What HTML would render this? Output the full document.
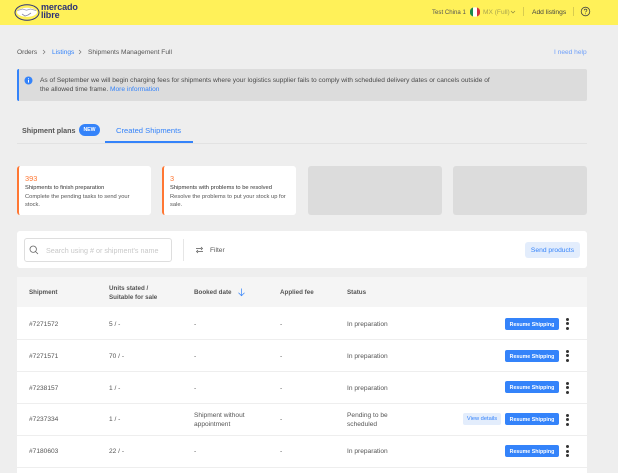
<!DOCTYPE html>
<html><head><meta charset="utf-8">
<style>
*{box-sizing:border-box}
html,body{margin:0;padding:0;width:618px;height:473px;overflow:hidden;background:#eeeeee;font-family:"Liberation Sans",sans-serif;color:#444}
.a{position:absolute;white-space:nowrap}
.t{font-size:6.6px;line-height:8px;color:#555}
.h{font-weight:bold;color:#555;font-size:6.25px}
.b{position:absolute;left:505px;width:54px;height:12px;background:#3483fa;border-radius:2px;color:#fff;font-size:5.3px;font-weight:bold;line-height:14px;text-align:center;white-space:nowrap;overflow:hidden}
.d{position:absolute;left:566px;width:3px;height:3px;border-radius:50%;background:#333}
.l{position:absolute;left:17px;width:570px;height:1px;background:#eeeeee}
.c{position:absolute;top:166px;width:134px;height:49px;border-radius:3px}
.s{font-size:5.75px;line-height:7.6px}
</style></head><body>
<div class="a" style="left:0;top:0;width:618px;height:25px;background:#fff159"></div>
<svg class="a" style="left:14px;top:3px" width="26" height="18" viewBox="0 0 26 18"><ellipse cx="13" cy="9.5" rx="12.5" ry="8.3" fill="#2d3277"/><ellipse cx="13" cy="9.5" rx="11.5" ry="7.3" fill="#fff159"/><ellipse cx="13" cy="9.3" rx="10" ry="4.6" fill="#fff"/><path d="M3.5 7.5l5-1.5 4 1.2 4-1.2 5.5 1.5" stroke="#9a9ab5" stroke-width=".8" fill="none"/><path d="M8 11l3 2 3-1 3-2" stroke="#8a8aa8" stroke-width=".8" fill="none"/></svg>
<div class="a" style="left:41px;top:4px;font-size:9px;line-height:7.8px;font-weight:bold;color:#2d3277;letter-spacing:-.1px">mercado<br>libre</div>
<div class="a t" style="left:432px;top:8.5px;font-size:6.1px">Test China 1</div>
<svg class="a" style="left:470px;top:7px" width="10" height="10" viewBox="0 0 10 10"><circle cx="5" cy="5" r="4.8" fill="#fff"/><path d="M3 .5A4.8 4.8 0 0 0 3 9.5Z" fill="#1a8a4a"/><path d="M7 .5A4.8 4.8 0 0 1 7 9.5Z" fill="#d5323c"/></svg>
<div class="a t" style="left:483px;top:8.5px;color:#a9a44f">MX (Full)</div>
<svg class="a" style="left:510px;top:10px" width="6" height="4" viewBox="0 0 6 4"><path d="M1 1l2 2 2-2" stroke="#8a8640" stroke-width=".7" fill="none"/></svg>
<div class="a" style="left:523px;top:7px;width:1px;height:9px;background:#d8cc50"></div>
<div class="a t" style="left:532px;top:8.5px;color:#444;font-size:6.7px">Add listings</div>
<div class="a" style="left:573px;top:7px;width:1px;height:9px;background:#d8cc50"></div>
<svg class="a" style="left:580px;top:6px" width="11" height="11" viewBox="0 0 11 11"><circle cx="5.5" cy="5.5" r="4.3" stroke="#444" stroke-width=".8" fill="none"/><path d="M4.2 4.4c0-1.7 2.7-1.7 2.7 0 0 1-1.3 1-1.3 2" stroke="#444" stroke-width=".7" fill="none"/><circle cx="5.5" cy="7.8" r=".45" fill="#444"/></svg>

<div class="a t" style="left:17px;top:49px">Orders</div>
<svg class="a" style="left:42px;top:49px" width="4" height="6" viewBox="0 0 4 6"><path d="M1 1l2 2-2 2" stroke="#777" stroke-width=".7" fill="none"/></svg>
<div class="a t" style="left:52px;top:49px;color:#3483fa">Listings</div>
<svg class="a" style="left:78px;top:49px" width="4" height="6" viewBox="0 0 4 6"><path d="M1 1l2 2-2 2" stroke="#777" stroke-width=".7" fill="none"/></svg>
<div class="a t" style="left:88px;top:49px">Shipments Management Full</div>
<div class="a t" style="left:554px;top:49px;color:#6e9ffa">I need help</div>

<div class="a" style="left:17px;top:69px;width:570px;height:32px;background:#dcdcdc;border-radius:2px;border-left:2px solid #3483fa"></div>
<svg class="a" style="left:24px;top:76px" width="9" height="9" viewBox="0 0 9 9"><circle cx="4.5" cy="4.5" r="4" fill="#3483fa"/><rect x="4" y="4" width="1" height="2.6" fill="#fff"/><rect x="4" y="2.3" width="1" height="1" fill="#fff"/></svg>
<div class="a t" style="left:40px;top:77px;line-height:8.5px;font-size:6.6px;color:#4a4a4a">As of September we will begin charging fees for shipments where your logistics supplier fails to comply with scheduled delivery dates or cancels outside of<br>the allowed time frame. <span style="color:#3483fa">More information</span></div>

<div class="a" style="left:22px;top:126px;font-size:7.2px;line-height:9px;font-weight:bold;color:#555">Shipment plans</div>
<div class="a" style="left:79px;top:124px;width:21px;height:12px;border-radius:6px;background:#3483fa;color:#fff;font-size:5.2px;font-weight:bold;line-height:12px;text-align:center">NEW</div>
<div class="a" style="left:116px;top:126px;font-size:7.6px;line-height:9px;color:#3483fa">Created Shipments</div>
<div class="a" style="left:17px;top:143px;width:570px;height:1px;background:#e2e2e2"></div>
<div class="a" style="left:105px;top:141px;width:88px;height:2px;background:#3483fa"></div>

<div class="c" style="left:17px;background:#fff;border-left:2px solid #ff7733"></div>
<div class="a" style="left:25px;top:174px;font-size:7.4px;line-height:9px;color:#ff7733">393</div>
<div class="a t s" style="left:25px;top:185px;color:#333">Shipments to finish preparation</div>
<div class="a t s" style="left:25px;top:194px">Complete the pending tasks to send your<br>stock.</div>
<div class="c" style="left:162px;background:#fff;border-left:2px solid #ff7733"></div>
<div class="a" style="left:170px;top:174px;font-size:7.4px;line-height:9px;color:#ff7733">3</div>
<div class="a t s" style="left:170px;top:185px;color:#333">Shipments with problems to be resolved</div>
<div class="a t s" style="left:170px;top:194px">Resolve the problems to put your stock up for<br>sale.</div>
<div class="c" style="left:308px;background:#dcdcdc"></div>
<div class="c" style="left:453px;background:#dcdcdc"></div>

<div class="a" style="left:17px;top:231px;width:570px;height:37px;background:#fff;border-radius:3px"></div>
<div class="a" style="left:24px;top:238px;width:148px;height:24px;border:1px solid #dedede;border-radius:3px"></div>
<svg class="a" style="left:29px;top:245px" width="10" height="10" viewBox="0 0 10 10"><circle cx="4.2" cy="4.2" r="3.2" stroke="#666" stroke-width=".8" fill="none"/><path d="M6.6 6.6L9 9" stroke="#666" stroke-width=".8"/></svg>
<div class="a t" style="left:46px;top:246.5px;color:#c8c8c8;font-size:7.2px">Search using # or shipment's name</div>
<div class="a" style="left:183px;top:239px;width:1px;height:22px;background:#e6e6e6"></div>
<svg class="a" style="left:195px;top:246px" width="9" height="8" viewBox="0 0 9 8"><path d="M1 2.5h5.5M6 1l1.5 1.5L6 4M8 5.5H2.5M3 4L1.5 5.5 3 7" stroke="#555" stroke-width=".7" fill="none"/></svg>
<div class="a t" style="left:210px;top:246.5px;color:#555">Filter</div>
<div class="a" style="left:525px;top:242px;width:55px;height:16px;background:#e3edfc;border-radius:3px;color:#3483fa;font-size:6.7px;line-height:17px;text-align:center">Send products</div>

<div class="a" style="left:17px;top:277px;width:570px;height:196px;background:#fff"></div>
<div class="a" style="left:17px;top:277px;width:570px;height:30px;background:#f5f5f5"></div>
<div class="a t h" style="left:29px;top:289px">Shipment</div>
<div class="a t h" style="left:109px;top:283.5px;line-height:9px">Units stated /<br>Suitable for sale</div>
<div class="a t h" style="left:194px;top:289px">Booked date</div>
<svg class="a" style="left:237px;top:288px" width="9" height="9" viewBox="0 0 9 9"><path d="M4.5 .5v7M1.5 4.8l3 3 3-3" stroke="#3483fa" stroke-width=".7" fill="none"/></svg>
<div class="a t h" style="left:280px;top:289px">Applied fee</div>
<div class="a t h" style="left:347px;top:289px">Status</div>

<div class="l" style="top:339px"></div><div class="l" style="top:371px"></div><div class="l" style="top:403px"></div><div class="l" style="top:435px"></div><div class="l" style="top:467px"></div>

<div class="a t" style="left:29px;top:321px">#7271572</div><div class="a t" style="left:109px;top:321px">5 / -</div><div class="a t" style="left:194px;top:321px">-</div><div class="a t" style="left:280px;top:321px">-</div><div class="a t" style="left:347px;top:321px">In preparation</div>
<div class="b" style="top:318px">Resume Shipping</div>
<div class="d" style="top:318px"></div><div class="d" style="top:322px"></div><div class="d" style="top:327px"></div>

<div class="a t" style="left:29px;top:353px">#7271571</div><div class="a t" style="left:109px;top:353px">70 / -</div><div class="a t" style="left:194px;top:353px">-</div><div class="a t" style="left:280px;top:353px">-</div><div class="a t" style="left:347px;top:353px">In preparation</div>
<div class="b" style="top:350px">Resume Shipping</div>
<div class="d" style="top:350px"></div><div class="d" style="top:354px"></div><div class="d" style="top:359px"></div>

<div class="a t" style="left:29px;top:385px">#7238157</div><div class="a t" style="left:109px;top:385px">1 / -</div><div class="a t" style="left:194px;top:385px">-</div><div class="a t" style="left:280px;top:385px">-</div><div class="a t" style="left:347px;top:385px">In preparation</div>
<div class="b" style="top:381px">Resume Shipping</div>
<div class="d" style="top:382px"></div><div class="d" style="top:386px"></div><div class="d" style="top:391px"></div>

<div class="a t" style="left:29px;top:416px">#7237334</div><div class="a t" style="left:109px;top:416px">1 / -</div><div class="a t" style="left:194px;top:412px;line-height:8.5px">Shipment without<br>appointment</div><div class="a t" style="left:280px;top:416px">-</div><div class="a t" style="left:347px;top:412px;line-height:8.5px">Pending to be<br>scheduled</div>
<div class="a" style="left:463px;top:413px;width:38px;height:12px;background:#e3edfc;border-radius:2px;color:#3483fa;font-size:5.7px;line-height:13px;text-align:center">View details</div>
<div class="b" style="top:413px">Resume Shipping</div>
<div class="d" style="top:414px"></div><div class="d" style="top:418px"></div><div class="d" style="top:423px"></div>

<div class="a t" style="left:29px;top:448px">#7180603</div><div class="a t" style="left:109px;top:448px">22 / -</div><div class="a t" style="left:194px;top:448px">-</div><div class="a t" style="left:280px;top:448px">-</div><div class="a t" style="left:347px;top:448px">In preparation</div>
<div class="b" style="top:445px">Resume Shipping</div>
<div class="d" style="top:445px"></div><div class="d" style="top:450px"></div><div class="d" style="top:454px"></div>
</body></html>
